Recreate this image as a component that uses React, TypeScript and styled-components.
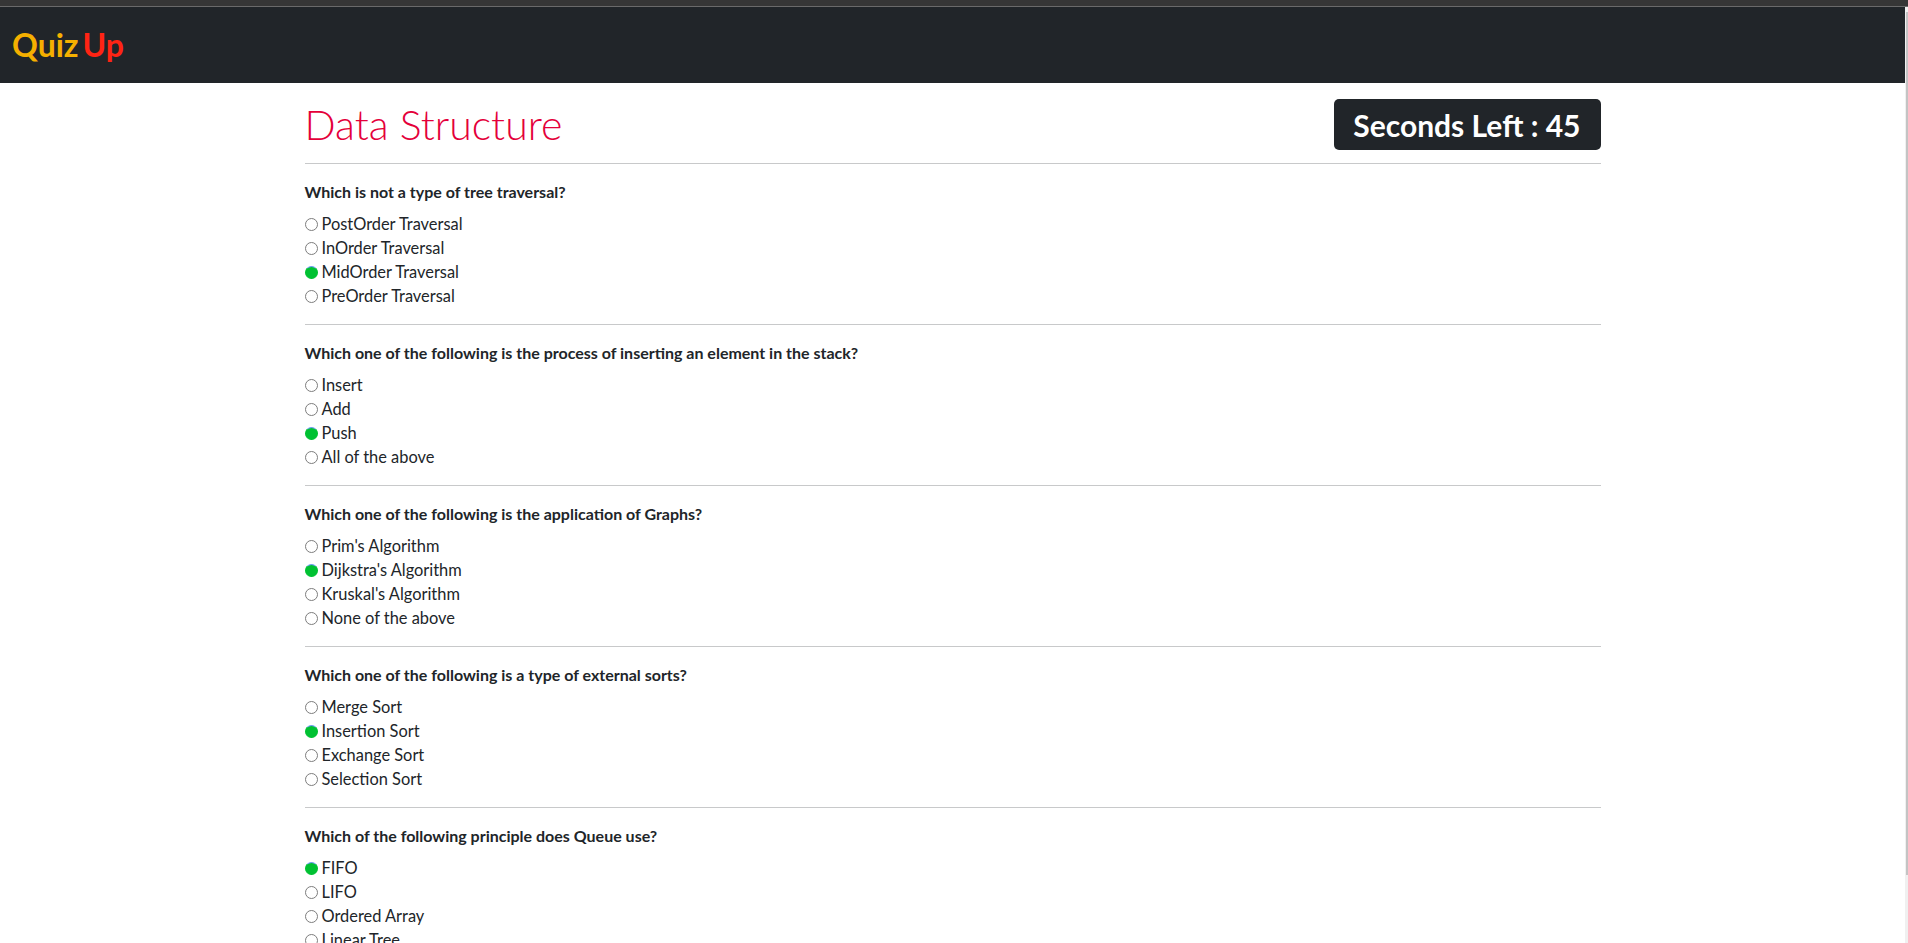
import React from "react";
import styled, { createGlobalStyle } from "styled-components";

const GlobalStyle = createGlobalStyle`
  html, body {
    margin: 0;
    padding: 0;
    height: 100%;
    overflow: hidden;
    background: #ffffff;
  }
  body {
    font-family: "Lato", "Noto Sans", "Liberation Sans", sans-serif;
    color: #212529;
    font-size: 16px;
  }
  * { box-sizing: border-box; }
`;

const Shell = styled.div`
  display: flex;
  flex-direction: column;
  height: 100vh;
`;

const TopStrip = styled.div`
  height: 7px;
  flex: none;
  background: #363636;
  border-bottom: 1px solid #6a6a6a;
`;

const Frame = styled.div`
  flex: 1;
  min-height: 0;
  display: flex;
`;

const Page = styled.div`
  flex: 1;
  min-width: 0;
  overflow: hidden;
`;

const ScrollTrack = styled.div`
  width: 3px;
  flex: none;
  background: #f0f0f0;
  padding-top: 5px;
  display: flex;
  justify-content: flex-end;
`;

const ScrollThumb = styled.div`
  width: 2px;
  height: 863px;
  background: #c4c4c4;
`;

const NavBar = styled.header`
  height: 76px;
  background: #212529;
  display: flex;
  align-items: center;
  padding: 0 12px;
`;

const Brand = styled.div`
  font-size: 32px;
  font-weight: 700;
  line-height: 1;
  display: flex;
  gap: 4px;
`;

const BrandPart = styled.span<{ $color: string }>`
  color: ${(p) => p.$color};
`;

const Container = styled.main`
  max-width: 1320px;
  margin: 0 auto;
  padding: 16px 12px 0;
`;

const TitleRow = styled.div`
  display: flex;
  align-items: center;
  justify-content: space-between;
  height: 51px;
  margin-bottom: 13px;
`;

const Title = styled.h1`
  margin: 0;
  font-size: 41px;
  font-weight: 300;
  line-height: 1.2;
  color: #e4003a;
`;

const Timer = styled.div`
  height: 51px;
  display: inline-flex;
  align-items: center;
  padding: 0 20px 0 19px;
  background: #212529;
  color: #ffffff;
  border-radius: 5px;
  font-size: 30px;
  font-weight: 700;
`;

const QuestionBlock = styled.section`
  border-top: 1px solid #c8c9ca;
  padding-top: 16px;
  margin-bottom: 16px;
`;

const QuestionText = styled.p`
  margin: 0 0 8px;
  font-size: 16px;
  font-weight: 700;
  line-height: 24px;
`;

const OptionList = styled.div`
  display: flex;
  flex-direction: column;
`;

const OptionLabel = styled.label`
  display: flex;
  align-items: center;
  height: 24px;
  font-size: 16.4px;
  line-height: 24px;
  font-weight: 400;
  cursor: pointer;
`;

const Radio = styled.input`
  appearance: none;
  -webkit-appearance: none;
  width: 13px;
  height: 13px;
  margin: 0 4px 0 0;
  border-radius: 50%;
  border: 1px solid #7d7d7d;
  background: #ffffff;
  flex: none;

  &:checked {
    background: #00c132;
    border-color: #00c132;
    border-top-color: #6f9cf2;
  }
`;

type Question = { q: string; options: string[]; chosen: number };

const questions: Question[] = [
  {
    q: "Which is not a type of tree traversal?",
    options: ["PostOrder Traversal", "InOrder Traversal", "MidOrder Traversal", "PreOrder Traversal"],
    chosen: 2,
  },
  {
    q: "Which one of the following is the process of inserting an element in the stack?",
    options: ["Insert", "Add", "Push", "All of the above"],
    chosen: 2,
  },
  {
    q: "Which one of the following is the application of Graphs?",
    options: ["Prim's Algorithm", "Dijkstra's Algorithm", "Kruskal's Algorithm", "None of the above"],
    chosen: 1,
  },
  {
    q: "Which one of the following is a type of external sorts?",
    options: ["Merge Sort", "Insertion Sort", "Exchange Sort", "Selection Sort"],
    chosen: 1,
  },
  {
    q: "Which of the following principle does Queue use?",
    options: ["FIFO", "LIFO", "Ordered Array", "Linear Tree"],
    chosen: 0,
  },
];

export default function App() {
  return (
    <>
      <GlobalStyle />
      <Shell>
        <TopStrip />
        <Frame>
          <Page>
            <NavBar>
              <Brand>
                <BrandPart $color="#f5b000">Quiz</BrandPart>
                <BrandPart $color="#ff2414">Up</BrandPart>
              </Brand>
            </NavBar>
            <Container>
              <TitleRow>
                <Title>Data Structure</Title>
                <Timer>Seconds Left : 45</Timer>
              </TitleRow>
              {questions.map((item, qi) => (
                <QuestionBlock key={qi}>
                  <QuestionText>{item.q}</QuestionText>
                  <OptionList>
                    {item.options.map((opt, oi) => (
                      <OptionLabel key={oi}>
                        <Radio type="radio" name={`q${qi}`} defaultChecked={oi === item.chosen} />
                        {opt}
                      </OptionLabel>
                    ))}
                  </OptionList>
                </QuestionBlock>
              ))}
            </Container>
          </Page>
          <ScrollTrack>
            <ScrollThumb />
          </ScrollTrack>
        </Frame>
      </Shell>
    </>
  );
}
